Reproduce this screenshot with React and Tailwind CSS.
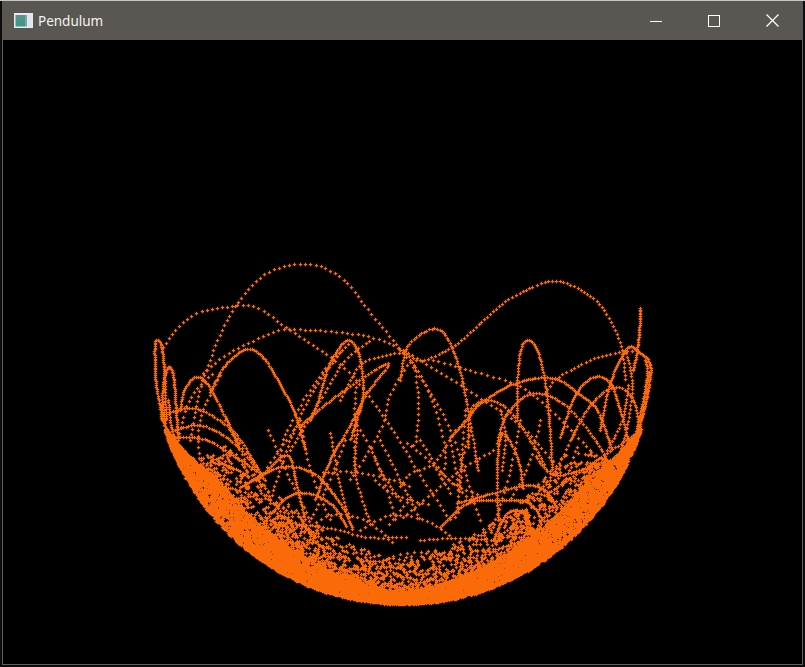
import React, { useMemo } from "react";

const CX = 402.5, CY = 355, R = 249.5;

// Trajectory arcs read off the picture: [dot spacing, x0,y0, x1,y1, ...]
const ARCS = [
  // upper region
  [5, 190,440, 197,400, 207,367, 222,330, 236,305, 258,279, 280,267, 297,264, 320,266, 345,281, 370,312, 403,353, 425,385, 450,430, 480,520],
  [5, 163,347, 175,330, 197,313, 225,307, 255,307, 290,330, 320,350, 350,373, 375,405, 393,430, 420,475, 450,520],
  [5, 203,373, 225,355, 250,342, 280,330, 310,330, 340,332, 375,338, 403,350, 440,372, 480,398, 520,425, 560,470],
  [2, 210,392, 225,365, 247,349, 265,360, 287,397, 297,420, 305,450],
  [2, 180,410, 184,390, 195,377, 208,385, 230,427, 240,450],
  [1.5, 164,425, 156,385, 154.5,350, 156,340, 161,345, 164,370, 166,420],
  [2, 160,405, 163,430, 168,445],
  [2, 162,395, 166,430, 172,455],
  [1.5, 162,420, 163,385, 168,367, 173,375, 176,410, 178,440],
  [2, 168,400, 172,430, 182,455],
  [5, 178,438, 187,405, 200,385, 215,372],
  [5, 200,470, 198,430, 205,405, 220,375],
  [2.5, 170,412, 195,408, 222,422, 240,440, 265,480],
  [2.5, 175,430, 200,425, 230,440, 258,470],
  [2, 310,420, 317,403, 330,362, 347,340, 358,352, 362,375, 362,400, 350,440],
  [2, 300,425, 340,393, 388,363, 365,395, 350,425, 330,460, 315,500],
  [4, 290,450, 320,400, 345,360, 370,340],
  [4, 270,500, 290,440, 312,392, 338,355, 352,340],
  [5, 280,460, 283,440, 302,402, 322,372, 340,352],
  [4, 340,400, 350,380, 362,363, 385,355, 405,352],
  [5, 355,470, 354,420, 356,385],
  [2.5, 400,380, 407,347, 430,329, 445,335, 458,365, 466,400, 478,470],
  [3.5, 400,350, 420,360, 450,348, 480,323, 510,298, 550,281, 575,287, 600,305, 620,343, 625,380],
  [5, 433,360, 463,368, 517,385, 545,405, 590,450],
  [5, 412,362, 430,395, 445,450, 440,480],
  [5, 414,365, 418,400, 416,440, 412,445],
  [5, 410,360, 390,395, 380,430, 350,480],
  [1.5, 640,308, 640,320, 637,350, 633,370],
  [2, 517,420, 517,387, 520,352, 527,340, 537,350, 545,383, 549,420, 552,470],
  [4, 545,393, 557,378, 590,360, 620,352, 640,350],
  [2, 450,437, 468,418, 480,403, 515,383, 553,378, 580,395, 597,410, 612,450],
  [2, 560,437, 575,395, 593,377, 610,383, 620,410, 628,440],
  [1.5, 600,430, 610,383, 627,348, 640,353, 648,360, 650.5,372, 646,400, 639,428],
  [2, 645,360, 647,372, 643,400, 634,440],
  [2.5, 570,440, 590,405, 613,387, 630,395, 638,420, 635,450],
  [3, 468,447, 470,410, 490,400, 510,412, 530,440, 545,465],
  [2.5, 497,443, 507,413, 533,393, 565,405, 595,440, 612,470],
  [3, 612,470, 625,435, 632,385, 625,350],
  [3, 637,440, 645,395, 649,370],
  [3, 607,450, 622,420, 628,385],
  [5, 450,440, 458,490, 455,520],
  [5, 465,410, 462,450, 460,490],
  [4, 502,470, 505,435, 500,410],
  [5, 300,420, 310,470, 330,520],
  [5, 268,430, 290,480, 310,520],
  [5, 225,420, 245,460, 270,495],
  [5, 380,440, 400,480, 420,520],
  [5, 355,420, 380,470, 395,520],
  [5, 345,440, 325,490, 310,520],
  [5, 520,420, 510,470, 495,520],
  [5, 575,430, 555,470, 530,500],
  [5, 540,420, 530,460, 510,500],
  [5, 375,480, 395,495, 430,505],
  [5, 420,440, 440,470, 470,500],
  // lower region
  [2, 240,487, 263,473, 287,455, 297,487, 305,520],
  [2, 247,483, 280,467, 313,473, 340,503, 353,530],
  [2, 263,523, 287,497, 307,493, 330,503, 347,527],
  [2.5, 177,437, 207,440, 240,460, 260,473],
  [2.5, 210,462, 227,465, 247,475],
  [4, 273,527, 307,525, 340,530, 367,537, 407,537],
  [5, 323,472, 357,472, 393,480, 410,487],
  [3.5, 330,433, 340,487, 350,520],
  [3.5, 357,430, 355,473, 370,523],
  [5, 293,430, 267,467],
  [5, 230,430, 253,463],
  [5, 410,497, 387,527],
  [2, 498,520, 497,463, 503,433, 518,460, 523,490],
  [2, 457,503, 493,493, 527,485, 547,492, 557,510],
  [2, 440,527, 467,503, 497,500, 527,502, 543,520],
  [2, 493,540, 507,513, 523,513, 533,533],
  [4, 420,540, 453,538, 500,540],
  [2.5, 607,460, 570,473, 550,473, 535,455],
  [2.5, 638,432, 607,453, 567,480, 545,495],
  [5, 493,450, 460,470, 427,497, 400,520],
  [5, 433,463, 453,483, 480,495],
  [5, 455,430, 433,463, 410,473, 400,487],
  [5, 470,430, 460,470, 458,517],
  [5, 407,443, 433,465, 450,493],
  [3, 590,470, 580,500, 565,525],
  [4, 400,500, 380,470, 370,445],
  [5, 360,530, 390,515, 425,520, 450,535],
  [5, 300,535, 330,515, 365,520, 395,545],
];

function rng(seed) {
  let s = seed >>> 0;
  return () => {
    s = (s + 0x6d2b79f5) >>> 0;
    let t = Math.imul(s ^ (s >>> 15), 1 | s);
    t = (t + Math.imul(t ^ (t >>> 7), 61 | t)) ^ t;
    return ((t ^ (t >>> 14)) >>> 0) / 4294967296;
  };
}

function sampleArc(arc, add) {
  const sp = arc[0];
  const pts = [];
  for (let i = 1; i < arc.length; i += 2) pts.push([arc[i], arc[i + 1]]);
  let last = null;
  for (let i = 0; i < pts.length - 1; i++) {
    const p0 = pts[Math.max(0, i - 1)], p1 = pts[i], p2 = pts[i + 1], p3 = pts[Math.min(pts.length - 1, i + 2)];
    for (let k = 0; k <= 40; k++) {
      const t = k / 40, t2 = t * t, t3 = t2 * t;
      const f = (a, b, c, d) => 0.5 * (2 * b + (c - a) * t + (2 * a - 5 * b + 4 * c - d) * t2 + (3 * b - a - 3 * c + d) * t3);
      const x = f(p0[0], p1[0], p2[0], p3[0]), y = f(p0[1], p1[1], p2[1], p3[1]);
      if (!last || Math.hypot(x - last[0], y - last[1]) >= sp) {
        add(x, y);
        last = [x, y];
      }
    }
  }
}

function buildPath() {
  const seen = new Set();
  const add = (x, y) => {
    const dx = x - CX, dy = y - CY;
    if (Math.hypot(dx, dy) > R) return;
    seen.add(Math.round(x) * 1000 + Math.round(y));
  };
  ARCS.forEach((a) => sampleArc(a, add));

  const r = rng(12345);
  const LIM = 1.27;
  const thick = (th) => {
    const a = Math.abs(th);
    const base = 13 + 15 * Math.sin(Math.min(a, Math.PI / 2) * 2);
    return a > 1.0 ? base * Math.max(0.12, 1 - (a - 1.0) / 0.3) : base;
  };
  // dense crescent along the bowl
  for (let i = 0; i < 10000; i++) {
    const th = (r() * 2 - 1) * LIM;
    const d = thick(th) * Math.pow(r(), 1.05);
    add(CX + Math.sin(th) * (R - d), CY + Math.cos(th) * (R - d));
  }
  // smooth outer edge
  for (let th = -LIM; th < LIM; th += 0.005) {
    add(CX + Math.sin(th) * (R - 1.5), CY + Math.cos(th) * (R - 1.5));
  }
  // speckled band inside the crescent
  for (let i = 0; i < 1300; i++) {
    const th = (r() * 2 - 1) * 1.1;
    const d = thick(th) + 34 * Math.pow(r(), 1.5);
    add(CX + Math.sin(th) * (R - d), CY + Math.cos(th) * (R - d));
  }
  // bounces in the bottom of the bowl
  let x = 280, y = 500, vx = 1.2, vy = 0;
  const g = 0.11;
  for (let i = 0; i < 3000; i++) {
    vy += g;
    x += vx;
    y += vy;
    const dx = x - CX, dy = y - CY, dist = Math.hypot(dx, dy);
    if (dist > R - 1) {
      const nx = dx / dist, ny = dy / dist;
      const dot = vx * nx + vy * ny;
      vx = (vx - 2 * dot * nx) * 0.9998;
      vy = (vy - 2 * dot * ny) * 0.9998;
      x = CX + nx * (R - 1);
      y = CY + ny * (R - 1);
    }
    if (y > 510 && i % 2 === 0) add(x, y);
  }

  let d = "";
  seen.forEach((k) => {
    const px = Math.floor(k / 1000), py = k - px * 1000;
    d += `M${px - 1.25} ${py + 0.5}h3.5M${px + 0.5} ${py - 1.25}v3.5`;
  });
  return d;
}

function AppIcon() {
  return (
    <svg width="19" height="15" viewBox="0 0 19 15" className="shrink-0">
      <defs>
        <linearGradient id="ic" x1="0" y1="0" x2="0" y2="1">
          <stop offset="0" stopColor="#5f8f8c" />
          <stop offset="1" stopColor="#2f9d86" />
        </linearGradient>
      </defs>
      <rect x="0" y="0" width="19" height="15" fill="#e6ebea" />
      <rect x="1.5" y="2" width="9.5" height="11.5" fill="url(#ic)" />
      <rect x="11" y="2" width="2" height="11.5" fill="#7f9fb0" />
      <rect x="13" y="2" width="4.5" height="11.5" fill="#dfe5ee" />
    </svg>
  );
}

export default function App() {
  const d = useMemo(buildPath, []);
  return (
    <div className="w-[805px] h-[667px] bg-[#0c0c0c] overflow-hidden flex flex-col" style={{ fontFamily: '"Noto Sans", "Open Sans", sans-serif' }}>
      <div className="h-px bg-[#c9c7c4] shrink-0" />
      <div className="mx-[2px] flex-1 flex flex-col min-h-0">
        <div className="h-[39px] shrink-0 bg-[#5a5651] flex items-center pl-[12px] text-white">
          <AppIcon />
          <span className="ml-[5px] text-[13.5px] leading-[20px] text-[#f4f3f2]">Pendulum</span>
          <div className="ml-auto flex h-full">
            <div className="w-[58px] flex items-center justify-center">
              <svg width="12" height="12" viewBox="0 0 12 12"><path d="M0 6.5h12" stroke="#ffffff" fill="none" /></svg>
            </div>
            <div className="w-[58px] flex items-center justify-center">
              <svg width="12" height="12" viewBox="0 0 12 12"><rect x="0.5" y="0.5" width="11" height="11" stroke="#ffffff" fill="none" /></svg>
            </div>
            <div className="w-[58px] flex items-center justify-center mr-[2px]">
              <svg width="13" height="13" viewBox="0 0 13 13"><path d="M0.5 0.5l12 12M12.5 0.5l-12 12" stroke="#ffffff" strokeWidth="1.3" fill="none" /></svg>
            </div>
          </div>
        </div>
        <div className="h-[625px] shrink-0 bg-black border-l border-r border-b border-[#5f5f5f]">
          <svg width="799" height="624" viewBox="3 40 799 624" className="block">
            <path d={d} stroke="#fb6a08" strokeWidth="1.25" fill="none" />
          </svg>
        </div>
      </div>
    </div>
  );
}
